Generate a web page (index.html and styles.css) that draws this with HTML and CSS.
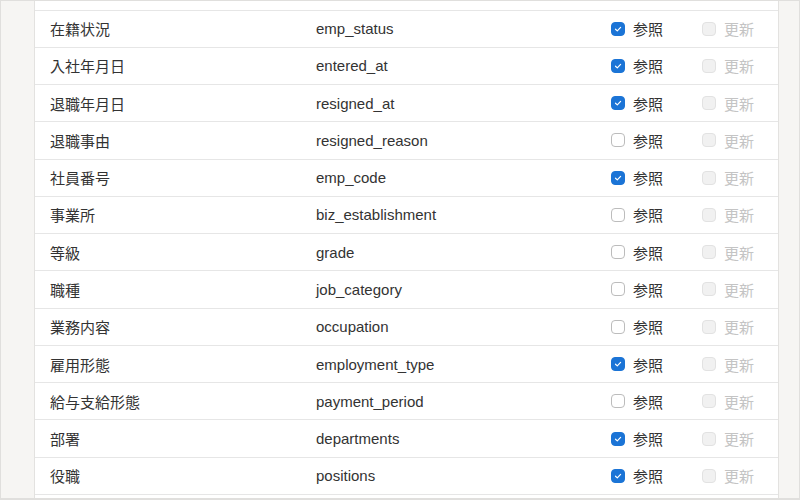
FILE: index.html
```html
<!DOCTYPE html>
<html lang="ja">
<head>
<meta charset="utf-8">
<link rel="stylesheet" href="styles.css">
</head>
<body>
<div class="frame">
  <div class="panel">
    <div class="row row-cut"></div>
    <div class="row"><span class="name">在籍状況</span><span class="key">emp_status</span><span class="perm"><span class="cb on"><svg viewBox="0 0 14 14"><path d="M4.5 7.2 L6.3 8.9 L9.6 5.4"/></svg></span>参照</span><span class="perm off"><span class="cb dis"></span>更新</span></div>
    <div class="row"><span class="name">入社年月日</span><span class="key">entered_at</span><span class="perm"><span class="cb on"><svg viewBox="0 0 14 14"><path d="M4.5 7.2 L6.3 8.9 L9.6 5.4"/></svg></span>参照</span><span class="perm off"><span class="cb dis"></span>更新</span></div>
    <div class="row"><span class="name">退職年月日</span><span class="key">resigned_at</span><span class="perm"><span class="cb on"><svg viewBox="0 0 14 14"><path d="M4.5 7.2 L6.3 8.9 L9.6 5.4"/></svg></span>参照</span><span class="perm off"><span class="cb dis"></span>更新</span></div>
    <div class="row"><span class="name">退職事由</span><span class="key">resigned_reason</span><span class="perm"><span class="cb"></span>参照</span><span class="perm off"><span class="cb dis"></span>更新</span></div>
    <div class="row"><span class="name">社員番号</span><span class="key">emp_code</span><span class="perm"><span class="cb on"><svg viewBox="0 0 14 14"><path d="M4.5 7.2 L6.3 8.9 L9.6 5.4"/></svg></span>参照</span><span class="perm off"><span class="cb dis"></span>更新</span></div>
    <div class="row"><span class="name">事業所</span><span class="key">biz_establishment</span><span class="perm"><span class="cb"></span>参照</span><span class="perm off"><span class="cb dis"></span>更新</span></div>
    <div class="row"><span class="name">等級</span><span class="key">grade</span><span class="perm"><span class="cb"></span>参照</span><span class="perm off"><span class="cb dis"></span>更新</span></div>
    <div class="row"><span class="name">職種</span><span class="key">job_category</span><span class="perm"><span class="cb"></span>参照</span><span class="perm off"><span class="cb dis"></span>更新</span></div>
    <div class="row"><span class="name">業務内容</span><span class="key">occupation</span><span class="perm"><span class="cb"></span>参照</span><span class="perm off"><span class="cb dis"></span>更新</span></div>
    <div class="row"><span class="name">雇用形態</span><span class="key">employment_type</span><span class="perm"><span class="cb on"><svg viewBox="0 0 14 14"><path d="M4.5 7.2 L6.3 8.9 L9.6 5.4"/></svg></span>参照</span><span class="perm off"><span class="cb dis"></span>更新</span></div>
    <div class="row"><span class="name">給与支給形態</span><span class="key">payment_period</span><span class="perm"><span class="cb"></span>参照</span><span class="perm off"><span class="cb dis"></span>更新</span></div>
    <div class="row"><span class="name">部署</span><span class="key">departments</span><span class="perm"><span class="cb on"><svg viewBox="0 0 14 14"><path d="M4.5 7.2 L6.3 8.9 L9.6 5.4"/></svg></span>参照</span><span class="perm off"><span class="cb dis"></span>更新</span></div>
    <div class="row"><span class="name">役職</span><span class="key">positions</span><span class="perm"><span class="cb on"><svg viewBox="0 0 14 14"><path d="M4.5 7.2 L6.3 8.9 L9.6 5.4"/></svg></span>参照</span><span class="perm off"><span class="cb dis"></span>更新</span></div>
  </div>
</div>
</body>
</html>
```
FILE: styles.css
```css
html, body {
  margin: 0;
  padding: 0;
}
body {
  font-family: "Liberation Sans", "Noto Sans CJK JP", sans-serif;
  font-size: 15px;
  color: #333;
}
.frame {
  box-sizing: border-box;
  width: 800px;
  height: 500px;
  overflow: hidden;
  background: #f6f5f3;
  border: 1px solid #e0dfdd;
  border-bottom-width: 2px;
}
.panel {
  margin-left: 33px;
  width: 745px;
  box-sizing: border-box;
  height: 100%;
  background: #fff;
  border-left: 1px solid #e3e2e0;
  border-right: 1px solid #e3e2e0;
}
.row {
  box-sizing: border-box;
  height: 37.27px;
  border-bottom: 1px solid #e6e6e6;
  display: grid;
  grid-template-columns: 266px 295px 91px auto;
  align-items: center;
  padding-left: 15px;
}
.row-cut {
  height: 9.5px;
}
.perm {
  display: flex;
  align-items: center;
  gap: 8px;
}
.perm.off {
  color: #c4c4c4;
}
.cb {
  box-sizing: border-box;
  width: 14px;
  height: 14px;
  border-radius: 4px;
  border: 1px solid #bcbcbc;
  background: #fff;
  display: inline-flex;
  align-items: center;
  justify-content: center;
}
.cb.on {
  background: #1b74d6;
  border-color: #1b74d6;
}
.cb.on svg {
  width: 14px;
  height: 14px;
  flex: none;
}
.cb.on path {
  fill: none;
  stroke: #fff;
  stroke-width: 1.2;
  stroke-linecap: round;
  stroke-linejoin: round;
}
.cb.dis {
  background: #f1f1f1;
  border-color: #e2e2e2;
}
```
